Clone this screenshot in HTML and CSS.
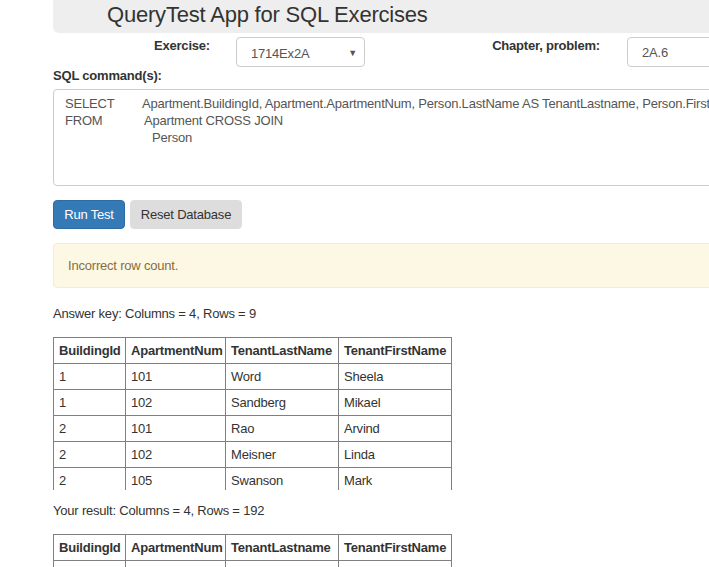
FILE: index.html
```html
<!DOCTYPE html>
<html>
<head>
<meta charset="utf-8">
<link rel="stylesheet" href="styles.css">
</head>
<body>
<div class="page">
  <div class="jumbo"><h1 class="title">QueryTest App for SQL Exercises</h1></div>
  <div class="form-row">
    <label class="lbl lbl-ex">Exercise:</label>
    <div class="select"><span>1714Ex2A</span><span class="caret">&#9660;</span></div>
    <label class="lbl lbl-ch">Chapter, problem:</label>
    <div class="input">2A.6</div>
  </div>
  <div class="sql-label">SQL command(s):</div>
  <div class="textarea">
    <div class="line"><span class="kw">SELECT</span><span class="c1">Apartment.BuildingId, Apartment.ApartmentNum, Person.LastName AS TenantLastname, Person.FirstName AS TenantFirstName</span></div>
    <div class="line"><span class="kw">FROM</span><span class="c2">Apartment CROSS JOIN</span></div>
    <div class="line"><span class="kw"></span><span class="c3">Person</span></div>
  </div>
  <div class="buttons">
    <button class="btn btn-primary">Run Test</button>
    <button class="btn btn-default">Reset Database</button>
  </div>
  <div class="alert">Incorrect row count.</div>
  <p class="caption cap1">Answer key: Columns = 4, Rows = 9</p>
  <div class="tbl-wrap wrap1">
    <table class="grid">
      <tr><th>BuildingId</th><th>ApartmentNum</th><th>TenantLastName</th><th>TenantFirstName</th></tr>
      <tr><td>1</td><td>101</td><td>Word</td><td>Sheela</td></tr>
      <tr><td>1</td><td>102</td><td>Sandberg</td><td>Mikael</td></tr>
      <tr><td>2</td><td>101</td><td>Rao</td><td>Arvind</td></tr>
      <tr><td>2</td><td>102</td><td>Meisner</td><td>Linda</td></tr>
      <tr><td>2</td><td>105</td><td>Swanson</td><td>Mark</td></tr>
    </table>
  </div>
  <p class="caption cap2">Your result: Columns = 4, Rows = 192</p>
  <div class="tbl-wrap wrap2">
    <table class="grid">
      <tr><th>BuildingId</th><th>ApartmentNum</th><th>TenantLastname</th><th>TenantFirstName</th></tr>
      <tr><td>1</td><td>101</td><td>Word</td><td>Sheela</td></tr>
      <tr><td>1</td><td>101</td><td>Sandberg</td><td>Mikael</td></tr>
    </table>
  </div>
</div>
</body>
</html>
```
FILE: styles.css
```css
html, body { margin: 0; padding: 0; }
body {
  width: 709px;
  height: 567px;
  overflow: hidden;
  font-family: "Liberation Sans", Arial, sans-serif;
  font-size: 13px;
  letter-spacing: -0.2px;
  color: #333;
  background: #fff;
}
.page {
  margin-left: 53px;
  width: 900px;
}
.jumbo {
  background: #eee;
  height: 33px;
  border-radius: 0 0 6px 6px;
  padding-left: 54px;
  box-sizing: border-box;
}
.title {
  margin: 0;
  font-weight: normal;
  font-size: 22px;
  letter-spacing: -0.2px;
  line-height: 30px;
  color: #333;
}
.form-row {
  display: flex;
  align-items: flex-start;
  margin-top: 4px;
  height: 30px;
}
.lbl {
  font-weight: bold;
  text-align: right;
  padding-top: 1px;
  line-height: 15px;
  white-space: nowrap;
}
.lbl-ex { width: 157px; flex: none; }
.lbl-ch { width: 235px; flex: none; }
.select {
  flex: none;
  margin-left: 26px;
  width: 129px;
  height: 30px;
  box-sizing: border-box;
  border: 1px solid #ccc;
  border-radius: 4px;
  display: flex;
  align-items: center;
  justify-content: space-between;
  padding: 2px 7px 0 14px;
  color: #555;
}
.caret { font-size: 9px; color: #555; }
.input {
  flex: none;
  margin-left: 27px;
  width: 200px;
  height: 30px;
  box-sizing: border-box;
  border: 1px solid #ccc;
  border-radius: 4px;
  padding: 6px 14px 0;
  line-height: 17px;
  color: #555;
}
.sql-label {
  font-weight: bold;
  margin-top: 1px;
  line-height: 16px;
}
.textarea {
  margin-top: 5px;
  height: 97px;
  box-sizing: border-box;
  border: 1px solid #ccc;
  border-radius: 4px;
  padding: 5px 11px 6px;
  color: #555;
  white-space: nowrap;
  overflow: hidden;
  line-height: 17px;
}
.kw { display: inline-block; width: 77px; }
.c2 { margin-left: 2px; }
.c3 { margin-left: 10px; }
.buttons {
  display: flex;
  gap: 5px;
  margin-top: 14px;
}
.btn {
  font-family: inherit;
  font-size: 13px;
  letter-spacing: -0.2px;
  height: 29px;
  border-radius: 4px;
  border: 1px solid transparent;
  padding: 0;
  white-space: nowrap;
  text-align: center;
  cursor: pointer;
}
.btn-primary { background: #337ab7; border-color: #2e6da4; color: #fff; width: 72px; }
.btn-default { background: #ddd; border-color: #ddd; color: #333; width: 112px; }
.alert {
  margin-top: 14px;
  height: 45px;
  box-sizing: border-box;
  background: #fcf8e3;
  border: 1px solid #faebcc;
  border-radius: 4px;
  color: #8a6d3b;
  padding: 14px 14px 0;
  line-height: 16px;
}
.caption {
  margin: 0;
  line-height: 16px;
}
.cap1 { margin-top: 18px; }
.cap2 { margin-top: 13px; }
.tbl-wrap { overflow: hidden; }
.wrap1 { margin-top: 15px; height: 153px; }
.wrap2 { margin-top: 15px; height: 40px; }
.grid {
  border-collapse: collapse;
  table-layout: fixed;
  width: 399px;
}
.grid th, .grid td {
  border: 1px solid #808080;
  height: 25px;
  padding: 0 5px;
  text-align: left;
  line-height: 16px;
  color: #333;
  white-space: nowrap;
  overflow: hidden;
}
.grid th { font-weight: bold; }
.grid th:nth-child(1) { width: 61px; }
.grid th:nth-child(2) { width: 89px; }
.grid th:nth-child(3) { width: 102px; }
.grid th:nth-child(4) { width: 102px; }
```
